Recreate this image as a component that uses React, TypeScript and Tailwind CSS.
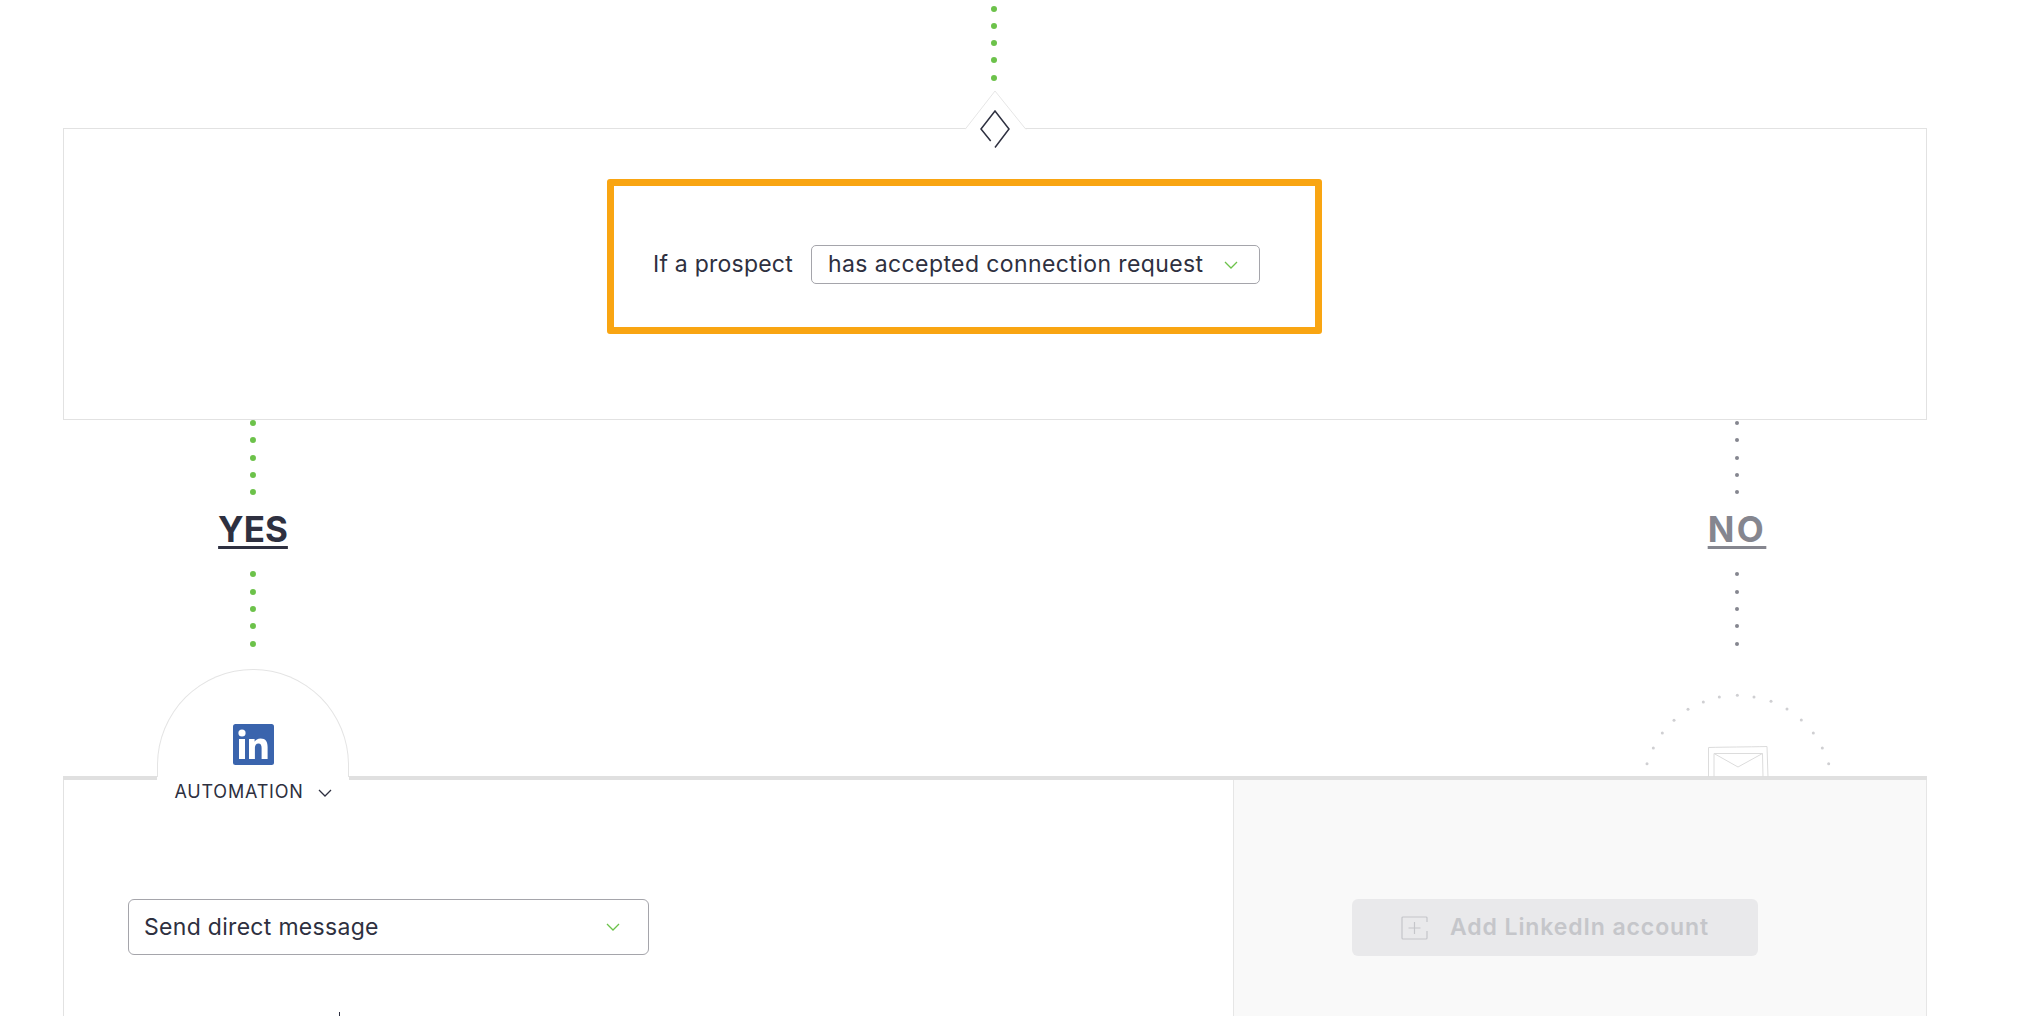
import React from 'react';

const font = { fontFamily: '"Inter", "Liberation Sans", sans-serif' };

const Dots: React.FC<{ color: string; size: string }> = ({ color, size }) => (
  <div className="flex flex-col items-center gap-y-[11.33px] shrink-0">
    {[0, 1, 2, 3, 4].map((i) => (
      <div key={i} className="h-[6px] flex items-center justify-center">
        <div className={`rounded-full ${size} ${color}`} />
      </div>
    ))}
  </div>
);

const Chevron: React.FC<{ className?: string; color?: string }> = ({ className, color = '#6cc24a' }) => (
  <svg viewBox="0 0 14 8" className={className} fill="none" stroke={color} strokeWidth="1.3">
    <path d="M1 1l6 6 6-6" />
  </svg>
);

const arcDots = [
  [138, 1058], [157, 1011], [184, 966], [219, 928], [261, 895], [307, 873], [355, 858], [409, 853],
  [459, 858], [510, 871], [558, 894], [601, 927], [637, 966], [664, 1011], [683, 1058],
];

const App: React.FC = () => {
  return (
    <div className="w-full h-[1016px] overflow-hidden bg-white px-[63px] text-[#2e3040]" style={font}>
      <div className="flex h-[128px] pt-[5.5px] pl-[928px]">
        <Dots color="bg-[#6cc24a]" size="w-[6px] h-[6px]" />
      </div>

      {/* condition box */}
      <div className="relative h-[292px] w-[1864px] border border-[#e2e2e2] pt-[50px] pl-[543px]">
        <svg className="absolute left-[901px] top-[-40px]" width="64" height="62" viewBox="965 88 64 62" fill="none">
          <path d="M965 128.5L995 90L1026 128.500" fill="#fff" stroke="#e6e6e6" strokeWidth="1" />
          <path d="M965.500 129H1025.500" stroke="#fff" strokeWidth="2" />
          <path d="M990.700 140L981 128L995 110L1009 128L995 146.500" stroke="#2e3040" strokeWidth="1.500" />
        </svg>
        <div className="flex items-center w-[715px] h-[155px] border-[7px] border-[#f9a512] rounded-[3px] pl-[39px] pt-[16px]">
          <span className="text-[23px] tracking-[0.23px] w-[158px] shrink-0 whitespace-nowrap">If a prospect</span>
          <div className="flex items-center justify-between w-[449px] h-[39px] border border-[#a5a5ab] rounded-[5px] pl-[16px] pr-[21px] shrink-0">
            <span className="text-[23px] tracking-[0.4px] whitespace-nowrap">has accepted connection request</span>
            <Chevron className="w-[14px] h-[8px]" />
          </div>
        </div>
      </div>

      {/* branches */}
      <div className="flex justify-between h-[356px] w-[1864px]">
        <div className="relative z-10 flex flex-col items-center w-[380px]">
          <Dots color="bg-[#6cc24a]" size="w-[6px] h-[6px]" />
          <div className="h-[76px] flex items-center shrink-0 pb-[9px]">
            <span className="text-[35px] leading-[36px] font-bold underline underline-offset-[4px] decoration-[3px]">YES</span>
          </div>
          <Dots color="bg-[#6cc24a]" size="w-[6px] h-[6px]" />
          <div className="mt-[22px] w-[192px] h-[108px] rounded-t-[96px] border border-b-0 border-[#e4e4e4] bg-white flex justify-center pt-[54px] shrink-0">
            <svg width="41" height="41" viewBox="0 0 41 41">
              <rect width="41" height="41" rx="2.500" fill="#3a64ad" />
              <circle cx="9" cy="9" r="3.600" fill="#fff" />
              <rect x="6" y="15" width="6" height="20" fill="#fff" />
              <path d="M16 15h5.600v2.800c1-1.900 3.100-3.300 6-3.300 5.200 0 7 3.200 7 8.400V35h-6V24c0-2.700-.8-4.500-3.100-4.500-2.500 0-3.600 1.900-3.600 4.600V35H16z" fill="#fff" />
            </svg>
          </div>
          <div className="w-[192px] h-[40px] bg-white flex justify-center items-start shrink-0 pt-[5px]">
            <span className="text-[18px] leading-[20px] tracking-[0.8px] whitespace-nowrap">AUTOMATION</span>
            <Chevron className="w-[14px] h-[8px] ml-[14px] mt-[7px]" color="#2e3040" />
          </div>
        </div>

        <div className="flex flex-col items-center w-[380px]">
          <Dots color="bg-[#85868f]" size="w-[4px] h-[4px]" />
          <div className="h-[76px] flex items-center shrink-0 pb-[9px]">
            <span className="text-[35px] leading-[36px] font-bold tracking-[2.5px] text-[#85868f] underline underline-offset-[4px] decoration-[3px]">NO</span>
          </div>
          <Dots color="bg-[#85868f]" size="w-[4px] h-[4px]" />
          <svg className="mt-[45px] shrink-0" width="200" height="85" viewBox="1636 691 200 85" fill="none">
            {arcDots.map(([x, y], i) => (
              <circle key={i} cx={1600 + x / 3} cy={410 + y / 3} r="1.500" fill="#cfcfd2" />
            ))}
            <path d="M1707.500 776V746.500C1725 746 1745 746 1766 745.500L1767 776" stroke="#dcdcdc" />
            <path d="M1713 776V752.500H1761.500L1762 776" stroke="#dcdcdc" />
            <path d="M1713 752.500L1737 766L1761.500 752.500" stroke="#dcdcdc" />
          </svg>
        </div>
      </div>

      {/* panel */}
      <div className="grid grid-cols-[1170px_694px] h-[240px] w-[1864px] border-t-4 border-[#e0e0e0]">
        <div className="border-l border-[#e2e2e2] pl-[64px] pt-[119px]">
          <div className="flex items-center justify-between w-[521px] h-[56px] border border-[#a5a5ab] rounded-[6px] pl-[15px] pr-[28px]">
            <span className="text-[23px] tracking-[0.3px] whitespace-nowrap">Send direct message</span>
            <Chevron className="w-[14px] h-[8px]" />
          </div>
          <div className="ml-[211px] mt-[57px] w-[1px] h-[4px] bg-[#2e3040]" />
        </div>
        <div className="bg-[#f9f9f9] border-x border-[#e6e6e6] pl-[118px] pt-[119px]">
          <div className="flex items-center w-[406px] h-[57px] rounded-[6px] bg-[#e9e9eb] pl-[49px]">
            <svg width="27" height="24" viewBox="0 0 27 24" fill="none" stroke="#c5c6ca" strokeWidth="1.200">
              <path d="M26 6V2a1 1 0 0 0-1-1H2a1 1 0 0 0-1 1v20a1 1 0 0 0 1 1h23a1 1 0 0 0 1-1v-7" />
              <path d="M13.500 6v12M7.500 12h12" />
            </svg>
            <span className="ml-[22px] text-[23px] font-semibold tracking-[0.9px] text-[#c5c6ca] whitespace-nowrap">Add LinkedIn account</span>
          </div>
        </div>
      </div>
    </div>
  );
};

export default App;
